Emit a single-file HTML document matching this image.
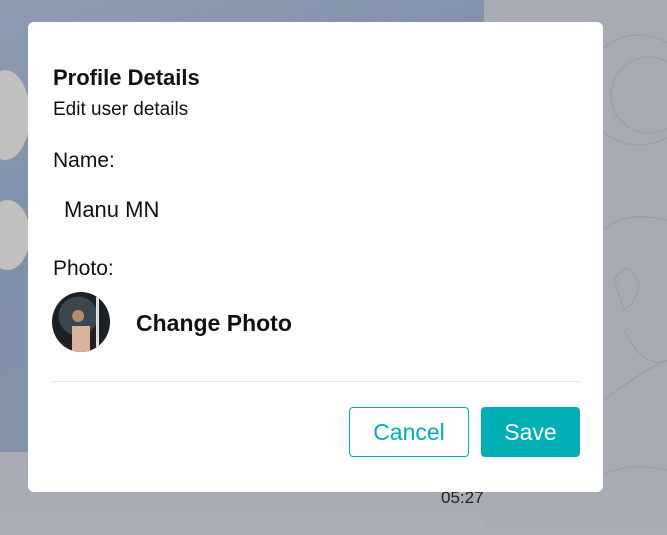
<!DOCTYPE html>
<html><head><style>
html,body{margin:0;padding:0;width:667px;height:530px;overflow:hidden;font-family:"Liberation Sans",sans-serif;background:#a9adb6;}
.bg{position:absolute;left:0;top:0;width:667px;height:530px;background:#a9adb6;}
.photo{position:absolute;left:0;top:0;width:484px;height:452px;background:linear-gradient(160deg,#8f9db3 0%,#7f8fa8 40%,#8a96ab 100%);}
.flower{position:absolute;border-radius:50%;background:#c2bfbf;}
.strip{position:absolute;left:0;top:452px;width:484px;height:64px;background:#a8abb3;}
.right{position:absolute;left:484px;top:0;width:183px;height:530px;background:#a7abb3;}
.dlg{position:absolute;left:28px;top:22px;width:575px;height:470px;background:#fff;border-radius:6px;}
.t{position:absolute;left:25px;color:#111;}
.btn{position:absolute;top:385px;height:48px;border-radius:4px;font-size:23px;text-align:center;line-height:48px;}
</style></head><body>
<div class="bg"></div>
<div class="photo">
<div class="flower" style="left:-20px;top:70px;width:50px;height:90px"></div>
<div class="flower" style="left:-15px;top:200px;width:45px;height:70px"></div>
</div>
<div class="strip"></div>
<div class="right">
<svg width="183" height="530" fill="none" stroke="#9a9ea7" stroke-width="1.3">
<circle cx="155" cy="90" r="55"/><circle cx="165" cy="95" r="38"/>
<circle cx="110" cy="185" r="5"/><path d="M130 280 q15 -25 25 5 q-5 20 -15 25z"/>
<path d="M120 400 q40 -30 63 -40"/><path d="M110 480 q30 -20 73 -10"/>
<path d="M140 330 q20 40 43 30"/><path d="M120 230 q20 -20 63 -10"/>
</svg>
</div>
<div style="position:absolute;left:441px;top:488px;font-size:17px;color:#222">05:27</div>
<div class="dlg">
<div class="t" style="top:43px;font-size:22px;font-weight:bold">Profile Details</div>
<div class="t" style="top:77px;font-size:19px">Edit user details</div>
<div class="t" style="top:127px;font-size:21px">Name:</div>
<div class="t" style="left:36px;top:175px;font-size:22px">Manu MN</div>
<div class="t" style="top:235px;font-size:21px">Photo:</div>
<div style="position:absolute;left:24px;top:270px;width:58px;height:60px;border-radius:50%;background:radial-gradient(circle at 45% 40%,#b88a6a 0 12%,#3a4650 13% 40%,#1d2126 41%);overflow:hidden">
<div style="position:absolute;left:20px;top:34px;width:18px;height:26px;background:#d8b39a"></div>
<div style="position:absolute;left:44px;top:5px;width:3px;height:50px;background:#ddd"></div>
</div>
<div class="t" style="left:108px;top:288px;font-size:23px;font-weight:bold">Change Photo</div>
<div style="position:absolute;left:24px;top:359px;width:528px;height:1px;background:#e3e6ea"></div>
<div class="btn" style="left:321px;width:118px;border:1px solid #00adb5;color:#00adb5;top:385px;height:48px;line-height:48px">Cancel</div>
<div class="btn" style="left:453px;width:99px;background:#00aeb5;color:#fff;height:50px;line-height:50px">Save</div>
</div>
</body></html>
